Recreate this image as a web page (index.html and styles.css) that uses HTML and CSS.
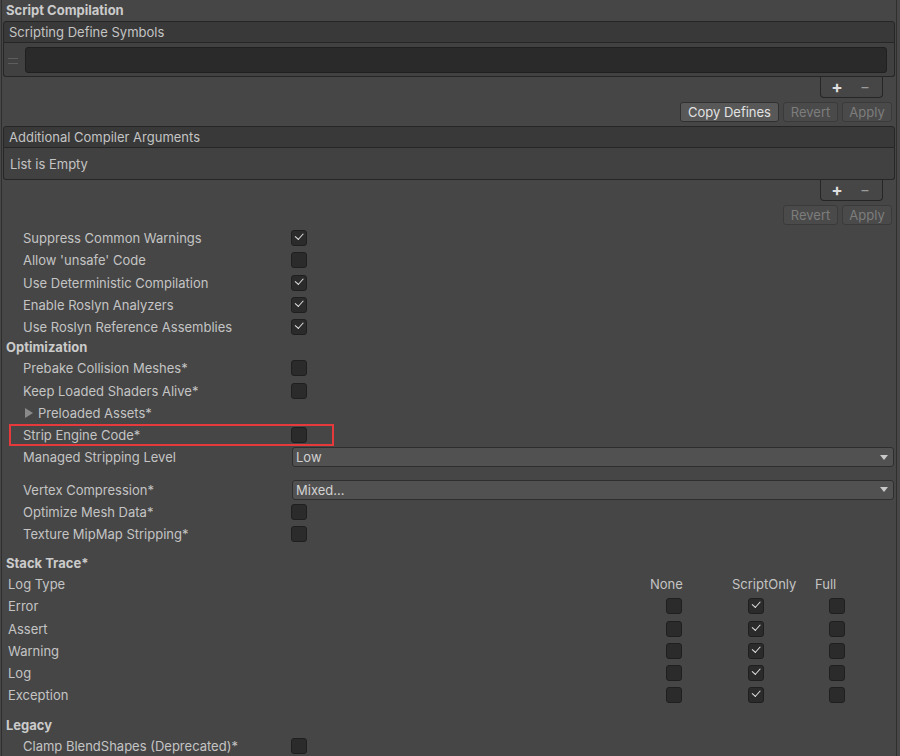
FILE: index.html
```html
<!DOCTYPE html>
<html>
<head>
<meta charset="utf-8">
<link rel="stylesheet" href="styles.css">
</head>
<body>
<div class="panel">
  <div class="section-title first">Script Compilation</div>

  <div class="list">
    <div class="list-head">Scripting Define Symbols</div>
    <div class="list-body define-body">
      <span class="handle"></span>
      <div class="textfield"></div>
    </div>
    <div class="list-foot"><span class="plus">+</span><span class="minus">−</span></div>
  </div>
  <div class="btn-row">
    <button class="btn copy">Copy Defines</button>
    <button class="btn disabled revert">Revert</button>
    <button class="btn disabled apply">Apply</button>
  </div>

  <div class="list">
    <div class="list-head">Additional Compiler Arguments</div>
    <div class="list-body empty-body">List is Empty</div>
    <div class="list-foot"><span class="plus">+</span><span class="minus">−</span></div>
  </div>
  <div class="btn-row">
    <button class="btn disabled revert">Revert</button>
    <button class="btn disabled apply">Apply</button>
  </div>

  <div class="rows first-rows">
    <div class="row"><span class="label">Suppress Common Warnings</span><span class="cb on"></span></div>
    <div class="row"><span class="label">Allow 'unsafe' Code</span><span class="cb"></span></div>
    <div class="row"><span class="label">Use Deterministic Compilation</span><span class="cb on"></span></div>
    <div class="row"><span class="label">Enable Roslyn Analyzers</span><span class="cb on"></span></div>
    <div class="row"><span class="label">Use Roslyn Reference Assemblies</span><span class="cb on"></span></div>
  </div>

  <div class="section-title opt-title">Optimization</div>
  <div class="rows">
    <div class="row"><span class="label">Prebake Collision Meshes*</span><span class="cb"></span></div>
    <div class="row"><span class="label">Keep Loaded Shaders Alive*</span><span class="cb"></span></div>
    <div class="row"><span class="label foldout"><span class="tri"></span>Preloaded Assets*</span></div>
    <div class="row highlighted"><span class="label">Strip Engine Code*</span><span class="cb"></span></div>
    <div class="row"><span class="label">Managed Stripping Level</span><div class="dropdown"><span>Low</span><span class="arrow"></span></div></div>
    <div class="row spaced"><span class="label">Vertex Compression*</span><div class="dropdown"><span>Mixed...</span><span class="arrow"></span></div></div>
    <div class="row"><span class="label">Optimize Mesh Data*</span><span class="cb"></span></div>
    <div class="row"><span class="label">Texture MipMap Stripping*</span><span class="cb"></span></div>
  </div>

  <div class="section-title stack-title">Stack Trace*</div>
  <div class="stack">
    <div class="srow shead"><span class="slabel">Log Type</span><span class="col c1">None</span><span class="col c2">ScriptOnly</span><span class="col c3">Full</span></div>
    <div class="srow"><span class="slabel">Error</span><span class="col c1"><span class="cb"></span></span><span class="col c2"><span class="cb on"></span></span><span class="col c3"><span class="cb"></span></span></div>
    <div class="srow"><span class="slabel">Assert</span><span class="col c1"><span class="cb"></span></span><span class="col c2"><span class="cb on"></span></span><span class="col c3"><span class="cb"></span></span></div>
    <div class="srow"><span class="slabel">Warning</span><span class="col c1"><span class="cb"></span></span><span class="col c2"><span class="cb on"></span></span><span class="col c3"><span class="cb"></span></span></div>
    <div class="srow"><span class="slabel">Log</span><span class="col c1"><span class="cb"></span></span><span class="col c2"><span class="cb on"></span></span><span class="col c3"><span class="cb"></span></span></div>
    <div class="srow"><span class="slabel">Exception</span><span class="col c1"><span class="cb"></span></span><span class="col c2"><span class="cb on"></span></span><span class="col c3"><span class="cb"></span></span></div>
  </div>

  <div class="section-title legacy-title">Legacy</div>
  <div class="rows">
    <div class="row"><span class="label">Clamp BlendShapes (Deprecated)*</span><span class="cb"></span></div>
  </div>
</div>
</body>
</html>
```

FILE: styles.css
```css
html, body {
  margin: 0;
  padding: 0;
  background: #474747;
  height: 756px;
  overflow: hidden;
}
body {
  font-family: Inter, "Noto Sans", sans-serif;
  font-size: 13px;
  color: #c4c4c4;
}
.panel {
  width: 894px;
  height: 756px;
  margin-left: 1px;
  border-left: 1px solid #2f2f2f;
  border-right: 1px solid #2f2f2f;
  background: #464646;
}
.section-title {
  font-weight: 700;
  color: #cbcbcb;
  height: 20px;
  line-height: 20px;
  padding-left: 4px;
}
.section-title.first { height: 21px; line-height: 20px; }
.section-title.opt-title { height: 19px; line-height: 19px; }

.list { margin: 0 0 0 1px; width: 892px; }
.list-head {
  height: 20px;
  line-height: 20px;
  background: #393939;
  border: 1px solid #262626;
  border-radius: 3px 3px 0 0;
  padding-left: 5px;
  color: #c4c4c4;
}
.list-body {
  background: #414141;
  border: 1px solid #262626;
  border-top: none;
  border-radius: 0 0 3px 3px;
}
.define-body {
  height: 33px;
  display: flex;
  align-items: center;
  padding-left: 4px;
  padding-right: 7px;
}
.handle {
  width: 10px;
  height: 4px;
  border-top: 1px solid #5e5e5e;
  border-bottom: 1px solid #5e5e5e;
  margin-right: 7px;
  margin-top: 2px;
  flex: none;
}
.textfield {
  flex: 1;
  height: 24px;
  background: #2a2a2a;
  border: 1px solid #202020;
  border-radius: 3px;
}
.empty-body {
  height: 31px;
  line-height: 32px;
  padding-left: 6px;
}
.list-foot {
  margin-left: 817px;
  width: 61px;
  height: 20px;
  border: 1px solid #262626;
  border-top: none;
  border-radius: 0 0 4px 4px;
  background: #464646;
  display: flex;
  align-items: center;
}
.plus {
  width: 16px;
  margin-left: 8px;
  text-align: center;
  font-size: 17px;
  font-weight: 700;
  color: #dedede;
  line-height: 18px;
}
.minus {
  width: 16px;
  margin-left: 12px;
  text-align: center;
  font-size: 15px;
  color: #9c9c9c;
  line-height: 18px;
}
.btn-row {
  display: flex;
  justify-content: flex-end;
  gap: 4px;
  padding-right: 4px;
  margin-top: 4px;
  margin-bottom: 4px;
  height: 20px;
}
.btn {
  font-family: inherit;
  font-size: 13px;
  height: 20px;
  padding: 0 6px;
  margin: 0;
  border-radius: 3px;
  background: #585858;
  border: 1px solid #303030;
  color: #e2e2e2;
  line-height: 18px;
  box-sizing: border-box;
}
.btn.copy { width: 99px; }
.btn.disabled {
  background: #4a4a4a;
  border-color: #3a3a3a;
  color: #7d7d7d;
}
.btn.revert { width: 55px; }
.btn.apply { width: 50px; }

.rows { padding-left: 21px; }
.first-rows { margin-top: -2px; }
.row {
  position: relative;
  height: 22.25px;
  display: flex;
  align-items: center;
}
.label {
  width: 268px;
  flex: none;
  white-space: nowrap;
}
.cb {
  display: inline-block;
  width: 14px;
  height: 14px;
  background: #2b2b2b;
  border: 1px solid #1f1f1f;
  border-radius: 3px;
  position: relative;
  flex: none;
}
.cb.on::after {
  content: "";
  position: absolute;
  left: 3px;
  top: 2px;
  width: 7px;
  height: 3.5px;
  border-left: 1.8px solid #e4e4e4;
  border-bottom: 1.8px solid #e4e4e4;
  transform: rotate(-48deg);
  transform-origin: center;
}
.foldout { display: flex; align-items: center; }
.tri {
  width: 0;
  height: 0;
  border-top: 5px solid transparent;
  border-bottom: 5px solid transparent;
  border-left: 8px solid #8a8a8a;
  margin-left: 2px;
  margin-right: 5px;
}
.row.highlighted::after {
  content: "";
  position: absolute;
  left: -14px;
  top: 0;
  width: 321px;
  height: 18px;
  border: 2px solid #e6393b;
}
.dropdown {
  width: 592px;
  height: 18px;
  background: #515151;
  border: 1px solid #2e2e2e;
  border-radius: 3px;
  display: flex;
  align-items: center;
  justify-content: space-between;
  padding: 0 5px 0 3px;
  color: #d2d2d2;
  margin-left: 1px;
}
.arrow {
  width: 0;
  height: 0;
  border-left: 4px solid transparent;
  border-right: 4px solid transparent;
  border-top: 5px solid #c8c8c8;
}
.row.spaced { margin-top: 10px; }

.stack-title { margin-top: 8px; }
.srow {
  display: flex;
  align-items: center;
  height: 22.25px;
}
.slabel {
  width: 642px;
  padding-left: 6px;
  flex: none;
}
.col { flex: none; display: flex; }
.c1 { width: 82px; }
.c2 { width: 83px; }
.c3 { width: 60px; }
.srow .c1 .cb { margin-left: 16px; }
.srow .c2 .cb { margin-left: 16px; }
.srow .c3 .cb { margin-left: 14px; }
.shead { height: 22px; }
.legacy-title { margin-top: 8px; }
```
